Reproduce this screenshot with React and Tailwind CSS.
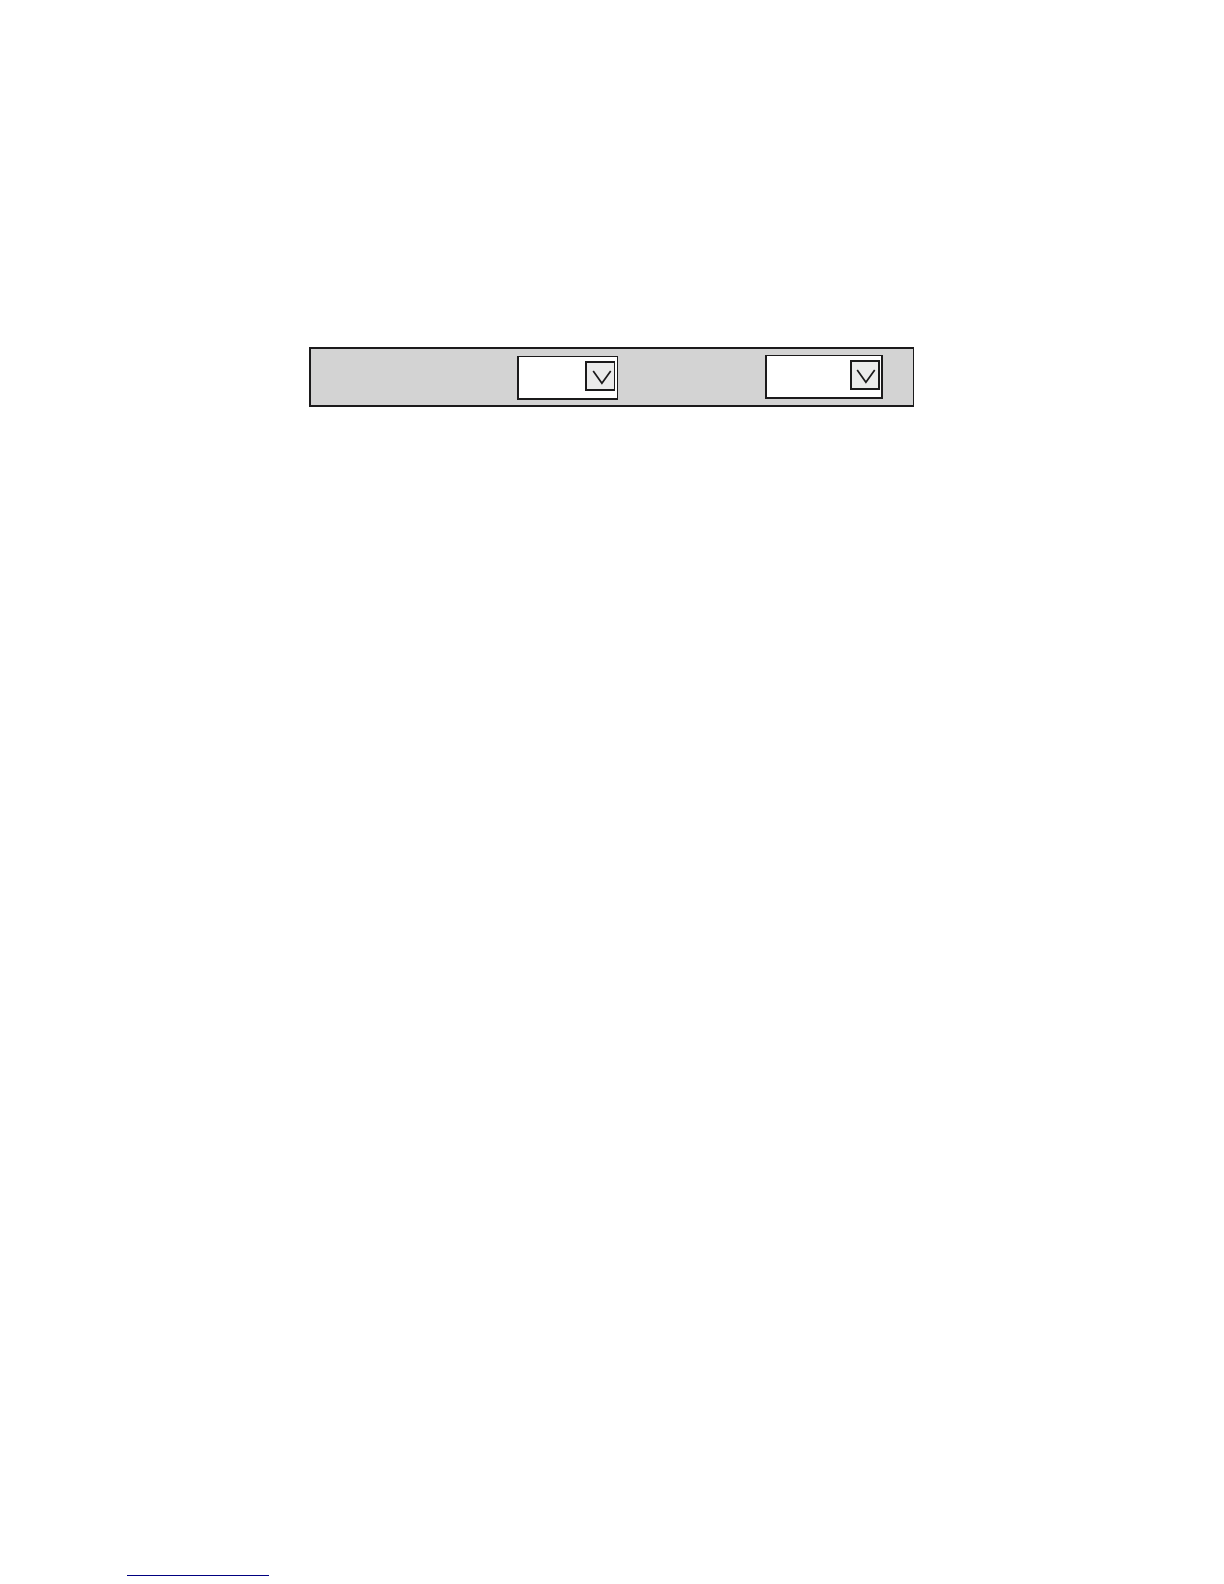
function DropDown({ label, className, buttonClassName }) {
  return (
    <label className={`relative flex h-11 shrink-0 border-[#1b1a1b] border-t border-b-2 border-l-2 bg-white ${className}`}>
      <select
        aria-label={label}
        defaultValue=""
        className="w-full cursor-pointer appearance-none bg-transparent pl-2 pr-9 font-['Liberation_Sans',sans-serif] text-base text-[#1b1a1b]"
      >
        <option value=""></option>
      </select>
      <span
        aria-hidden="true"
        className={`pointer-events-none absolute top-1 flex size-[30px] justify-end border-y-2 border-l-2 border-[#1b1a1b] bg-[#ebebeb] ${buttonClassName}`}
      >
        <svg viewBox="0 0 26 26" className="size-[26px] shrink-0" fill="none" stroke="#1b1a1b" strokeWidth="1.7">
          <path d="M5.2 8 L13.9 20.3 L22.7 8" />
        </svg>
      </span>
    </label>
  );
}

export default function App() {
  return (
    <div className="flex min-h-screen flex-col justify-between bg-white pt-[347px] pb-2">
      <main className="pr-[310px] pl-[309px]">
        <form className="flex h-[60px] items-start justify-end border-2 border-r border-[#1b1a1b] bg-[#d3d3d3] pr-[30px]">
          <div className="pt-[7px] pr-[147px]">
            <DropDown label="First option" className="w-[101px] border-r" buttonClassName="right-0.5 border-r" />
          </div>
          <div className="pt-1.5">
            <DropDown label="Second option" className="w-[118px] border-r-2" buttonClassName="right-px border-r-2" />
          </div>
        </form>
      </main>
      <footer className="pl-[127px]">
        <a href="#top" aria-label="Back to top" className="block h-5 w-[142px] border-b border-[#000080]"></a>
      </footer>
    </div>
  );
}
